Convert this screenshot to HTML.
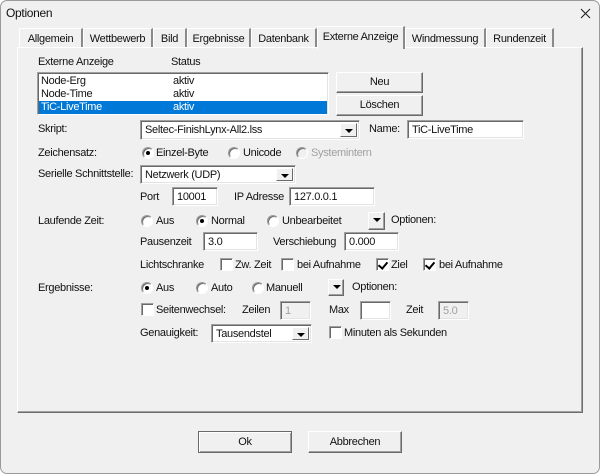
<!DOCTYPE html>
<html><head><meta charset="utf-8"><style>
*{box-sizing:border-box;margin:0;padding:0}
body{width:600px;height:474px;background:#fff;font-family:"Liberation Sans",sans-serif;font-size:11px;letter-spacing:-0.3px;color:#111;overflow:hidden;position:relative}
.win{position:absolute;left:0;top:0;width:600px;height:474px;background:#f0f0f0;border:1px solid #9a9a9a;border-radius:7px}
.a{position:absolute;white-space:nowrap;line-height:14px}
.tab{position:absolute;top:27px;height:19px;border:1px solid #fff;border-right:2px solid #8a8a8a;border-bottom:none;padding:3px 0 0;text-align:center;line-height:14px;background:#f0f0f0}
.panel{position:absolute;left:16px;top:46px;width:566px;height:366px;border:1px solid;border-color:#fff #6e6e6e #6e6e6e #fff;box-shadow:inset -1px -1px 0 #a0a0a0}
.ed{position:absolute;height:19px;background:#fff;border:1px solid;border-color:#a0a0a0 #fff #fff #a0a0a0;box-shadow:inset 1px 1px 0 #696969,inset -1px -1px 0 #e3e3e3;padding:2px 4px;line-height:14px}
.dis{background:#f0f0f0;color:#a0a0a0}
.btn{position:absolute;border:1px solid;border-color:#fff #696969 #696969 #fff;box-shadow:inset -1px -1px 0 #a0a0a0;background:#f0f0f0;text-align:center;line-height:18px}
.arr{position:absolute;width:17px;top:2px;bottom:2px;right:2px;border:1px solid;border-color:#fff #696969 #696969 #fff;background:#f0f0f0}
.arr:after{content:"";position:absolute;left:4px;top:5px;border-left:4px solid transparent;border-right:4px solid transparent;border-top:4px solid #000}
.rb{position:absolute;width:12px;height:12px;border-radius:50%;background:#fff;border:1px solid;border-color:#9a9a9a #fff #fff #9a9a9a;box-shadow:inset 1px 1px 0 #696969}
.rb.on:after{content:"";position:absolute;left:3px;top:3px;width:4px;height:4px;border-radius:50%;background:#000}
.cb{position:absolute;width:13px;height:13px;background:#fff;border:1px solid;border-color:#a0a0a0 #fff #fff #a0a0a0;box-shadow:inset 1px 1px 0 #696969}
.cb.on:after{content:"";position:absolute;left:3px;top:1px;width:4px;height:7px;border:solid #000;border-width:0 2px 2px 0;transform:rotate(40deg)}
</style></head><body>
<div class="win">
<div class="a" style="left:5px;top:5px;font-size:12px">Optionen</div>
<svg style="position:absolute;left:579px;top:7px" width="11" height="11"><path d="M1 1L10 10M10 1L1 10" stroke="#222" stroke-width="1.1"/></svg>

<div class="tab" style="left:18px;width:64px">Allgemein</div>
<div class="tab" style="left:82px;width:70px">Wettbewerb</div>
<div class="tab" style="left:152px;width:34px">Bild</div>
<div class="tab" style="left:186px;width:64px">Ergebnisse</div>
<div class="tab" style="left:250px;width:66px">Datenbank</div>
<div class="panel"></div>
<div class="tab" style="left:316px;top:25px;height:23px;width:88px;border-bottom:none;z-index:2">Externe Anzeige</div>
<div class="tab" style="left:404px;width:81px">Windmessung</div>
<div class="tab" style="left:485px;width:68px">Rundenzeit</div>

<div class="a" style="left:37px;top:54px">Externe Anzeige</div>
<div class="a" style="left:170px;top:54px">Status</div>
<div class="ed" style="left:36px;top:71px;width:292px;height:43px;padding:2px 1px">
 <div style="position:relative;height:13px;line-height:13px;padding-left:2px">Node-Erg<span style="position:absolute;left:134px">aktiv</span></div>
 <div style="position:relative;height:13px;line-height:13px;padding-left:2px">Node-Time<span style="position:absolute;left:134px">aktiv</span></div>
 <div style="position:relative;height:13px;line-height:13px;padding-left:2px;background:#0078d7;color:#fff">TiC-LiveTime<span style="position:absolute;left:134px">aktiv</span></div>
</div>
<div class="btn" style="left:335px;top:71px;width:87px;height:21px">Neu</div>
<div class="btn" style="left:335px;top:94px;width:87px;height:21px">Löschen</div>

<div class="a" style="left:37px;top:121px">Skript:</div>
<div class="ed" style="left:139px;top:119px;width:220px;height:20px">Seltec-FinishLynx-All2.lss<div class="arr"></div></div>
<div class="a" style="left:368px;top:121px">Name:</div>
<div class="ed" style="left:406px;top:119px;width:117px">TiC-LiveTime</div>

<div class="a" style="left:37px;top:145px">Zeichensatz:</div>
<div class="rb on" style="left:141px;top:146px"></div><div class="a" style="left:155px;top:145px">Einzel-Byte</div>
<div class="rb" style="left:227px;top:146px"></div><div class="a" style="left:242px;top:145px">Unicode</div>
<div class="rb" style="left:295px;top:146px;background:#f0f0f0"></div><div class="a" style="left:310px;top:145px;color:#a0a0a0">Systemintern</div>

<div class="a" style="left:37px;top:166px">Serielle Schnittstelle:</div>
<div class="ed" style="left:139px;top:164px;width:156px">Netzwerk (UDP)<div class="arr"></div></div>
<div class="a" style="left:139px;top:189px">Port</div>
<div class="ed" style="left:171px;top:186px;width:46px">10001</div>
<div class="a" style="left:233px;top:189px">IP Adresse</div>
<div class="ed" style="left:288px;top:186px;width:86px">127.0.0.1</div>

<div class="a" style="left:37px;top:213px">Laufende Zeit:</div>
<div class="rb" style="left:140px;top:214px"></div><div class="a" style="left:155px;top:213px">Aus</div>
<div class="rb on" style="left:195px;top:214px"></div><div class="a" style="left:210px;top:213px">Normal</div>
<div class="rb" style="left:266px;top:214px"></div><div class="a" style="left:281px;top:213px">Unbearbeitet</div>
<div class="btn" style="left:367px;top:211px;width:17px;height:18px"><div class="arr" style="top:0;bottom:0;right:0;width:15px;border:none;background:none"></div></div>
<div class="a" style="left:390px;top:212px">Optionen:</div>

<div class="a" style="left:139px;top:234px">Pausenzeit</div>
<div class="ed" style="left:202px;top:231px;width:55px">3.0</div>
<div class="a" style="left:272px;top:234px">Verschiebung</div>
<div class="ed" style="left:343px;top:231px;width:55px">0.000</div>

<div class="a" style="left:139px;top:257px">Lichtschranke</div>
<div class="cb" style="left:219px;top:257px"></div><div class="a" style="left:234px;top:257px">Zw. Zeit</div>
<div class="cb" style="left:280px;top:257px"></div><div class="a" style="left:296px;top:257px">bei Aufnahme</div>
<div class="cb on" style="left:375px;top:257px"></div><div class="a" style="left:390px;top:257px">Ziel</div>
<div class="cb on" style="left:422px;top:257px"></div><div class="a" style="left:438px;top:257px">bei Aufnahme</div>

<div class="a" style="left:37px;top:280px">Ergebnisse:</div>
<div class="rb on" style="left:140px;top:281px"></div><div class="a" style="left:155px;top:280px">Aus</div>
<div class="rb" style="left:195px;top:281px"></div><div class="a" style="left:210px;top:280px">Auto</div>
<div class="rb" style="left:251px;top:281px"></div><div class="a" style="left:265px;top:280px">Manuell</div>
<div class="btn" style="left:327px;top:278px;width:16px;height:17px"><div class="arr" style="top:0;bottom:0;right:0;width:14px;border:none;background:none"></div></div>
<div class="a" style="left:351px;top:279px">Optionen:</div>

<div class="cb" style="left:140px;top:302px"></div><div class="a" style="left:155px;top:302px">Seitenwechsel:</div>
<div class="a" style="left:241px;top:302px">Zeilen</div>
<div class="ed dis" style="left:279px;top:300px;width:31px">1</div>
<div class="a" style="left:328px;top:302px">Max</div>
<div class="ed" style="left:359px;top:300px;width:31px"></div>
<div class="a" style="left:405px;top:302px">Zeit</div>
<div class="ed dis" style="left:437px;top:300px;width:31px">5.0</div>

<div class="a" style="left:139px;top:325px">Genauigkeit:</div>
<div class="ed" style="left:210px;top:323px;width:101px">Tausendstel<div class="arr"></div></div>
<div class="cb" style="left:328px;top:325px"></div><div class="a" style="left:343px;top:325px">Minuten als Sekunden</div>

<div class="btn" style="left:197px;top:430px;width:94px;height:22px;border:1px solid #696969;box-shadow:inset 1px 1px 0 #fff,inset -1px -1px 0 #a0a0a0;line-height:20px">Ok</div>
<div class="btn" style="left:307px;top:430px;width:94px;height:22px;line-height:20px">Abbrechen</div>
</div>
</body></html>
